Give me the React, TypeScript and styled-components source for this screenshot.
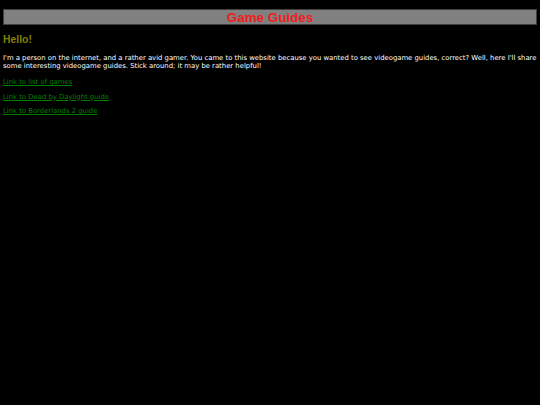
import styled, { createGlobalStyle } from 'styled-components';

const GlobalStyle = createGlobalStyle`
    html, body {
        background: #000000;
    }
    body {
        margin: 0;
        padding: 9px 3px;
        font-family: "DejaVu Sans", Verdana, sans-serif;
        color: #ffffff;
    }
`;

const Banner = styled.header`
    background: #808080;
    border: 1px solid #404040;
    height: 14px;
    display: flex;
    align-items: center;
    justify-content: center;
`;

const Title = styled.h1`
    margin: 0;
    font-family: "Liberation Sans", Arial, sans-serif;
    font-size: 13.4px;
    font-weight: bold;
    color: #f01c1c;
`;

const Greeting = styled.h2`
    margin: 9px 0 9px;
    font-family: "Liberation Sans", Arial, sans-serif;
    font-size: 10.4px;
    font-weight: bold;
    color: #808000;
`;

const Intro = styled.p`
    margin: 0 0 8px;
    font-size: 6.85px;
    line-height: 8px;
`;

const GuideLink = styled.a`
    display: block;
    margin: 0 0 6.5px;
    font-size: 6.85px;
    line-height: 8px;
    color: #008000;
`;

const App = () => {
    return (
        <>
            <GlobalStyle />
            <Banner>
                <Title>Game Guides</Title>
            </Banner>
            <Greeting>Hello!</Greeting>
            <Intro>
                I'm a person on the internet, and a rather avid gamer. You came to this website because you wanted
                to see videogame guides, correct? Well, here I'll share some interesting videogame guides. Stick
                around; it may be rather helpful!
            </Intro>
            <GuideLink href="#">Link to list of games</GuideLink>
            <GuideLink href="#">Link to Dead by Daylight guide</GuideLink>
            <GuideLink href="#">Link to Borderlands 2 guide</GuideLink>
        </>
    );
};

export default App;
